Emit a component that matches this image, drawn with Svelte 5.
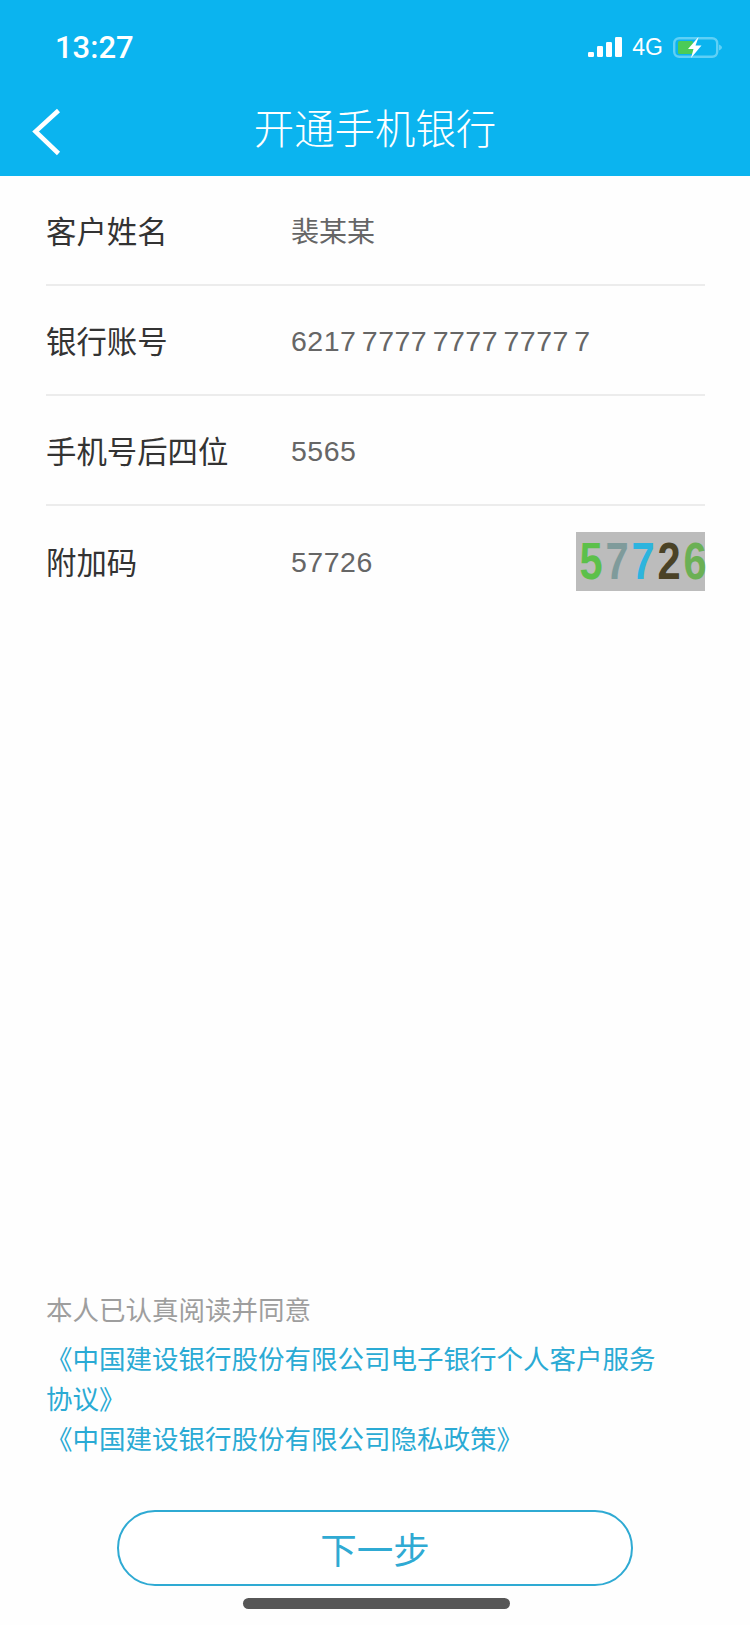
<script lang="ts">
  const rows = [
    { label: '客户姓名', value: '裴某某' },
    { label: '银行账号', value: '6217 7777 7777 7777 7', num: true },
    { label: '手机号后四位', value: '5565', num: true },
    { label: '附加码', value: '57726', num: true, captcha: true }
  ];

  const captchaDigits = [
    { ch: '5', color: '#5cc04a' },
    { ch: '7', color: '#7f9b9b' },
    { ch: '7', color: '#2db4de' },
    { ch: '2', color: '#4a4226' },
    { ch: '6', color: '#6bb055' }
  ];
</script>

<div class="page">
  <header class="top">
    <div class="status">
      <span class="time">13:27</span>
      <div class="status-right">
        <svg class="signal" viewBox="0 0 34 20" aria-hidden="true">
          <rect x="0" y="15" width="6" height="5" rx="1.2" />
          <rect x="9" y="9" width="6" height="11" rx="1.2" />
          <rect x="18" y="5" width="6" height="15" rx="1.2" />
          <rect x="27" y="0" width="7" height="20" rx="1.2" />
        </svg>
        <span class="net">4G</span>
        <svg class="battery" viewBox="0 0 49 21" aria-hidden="true">
          <rect x="1.2" y="1.2" width="43" height="18.6" rx="5" fill="none" stroke="#5fd0f6" stroke-width="2.4" />
          <path d="M46 7.5c2 .8 3 2 3 3s-1 2.2-3 3z" fill="#5fd0f6" />
          <rect x="5" y="4" width="15" height="13" rx="1.5" fill="#4bcb58" />
          <path d="M25 .5 15 12h5.5L18 21l10.5-12.5h-6L25.500 .5z" fill="#fff" />
        </svg>
      </div>
    </div>
    <nav class="nav">
      <svg class="back" viewBox="0 0 30 48" aria-label="返回">
        <path d="M26.5 2.500 3.500 23.500 26.500 45.500" fill="none" stroke="#fff" stroke-width="4.500" />
      </svg>
      <h1 class="title">开通手机银行</h1>
      <span></span>
    </nav>
  </header>

  <main class="form">
    {#each rows as row}
      <div class="row">
        <span class="label">{row.label}</span>
        <span class="value" class:num={row.num}>{row.value}</span>
        {#if row.captcha}
          <div class="captcha">
            {#each captchaDigits as d}
              <span class="digit" style="color: {d.color}">{d.ch}</span>
            {/each}
          </div>
        {/if}
      </div>
    {/each}
  </main>

  <footer class="foot">
    <p class="agree">本人已认真阅读并同意</p>
    <div class="links">
      <a href="#terms">《中国建设银行股份有限公司电子银行个人客户服务协议》</a>
      <a href="#privacy">《中国建设银行股份有限公司隐私政策》</a>
    </div>
    <button class="next">下一步</button>
    <div class="home-bar"></div>
  </footer>
</div>

<style>
  :global(body) {
    margin: 0;
    background: #fff;
  }

  .page {
    display: flex;
    flex-direction: column;
    width: 750px;
    height: 1625px;
    overflow: hidden;
    font-family: "Liberation Sans", "Noto Sans CJK SC", sans-serif;
    background: #fefefe;
  }

  .top {
    background: #0bb4ef;
    color: #fff;
  }

  .status {
    display: flex;
    align-items: center;
    justify-content: space-between;
    box-sizing: border-box;
    height: 84px;
    padding: 10px 28px 0 55px;
  }

  .time {
    margin-top: 1px;
    font-family: Roboto, "Liberation Sans", sans-serif;
    font-size: 31px;
    font-weight: 500;
    line-height: 36px;
  }

  .status-right {
    display: flex;
    align-items: center;
  }

  .signal {
    width: 34px;
    height: 20px;
    fill: #fff;
  }

  .net {
    margin: 0 10px;
    font-size: 23px;
    line-height: 24px;
  }

  .battery {
    width: 49px;
    height: 21px;
  }

  .nav {
    display: grid;
    grid-template-columns: 1fr auto 1fr;
    align-items: center;
    height: 92px;
  }

  .back {
    width: 30px;
    height: 48px;
    margin: 3px 0 0 32px;
  }

  .title {
    margin: 0;
    font-size: 40.4px;
    font-weight: 300;
    line-height: 48px;
  }

  .form {
    flex: 1;
  }

  .row {
    display: flex;
    align-items: center;
    box-sizing: border-box;
    height: 110px;
    margin: 0 45px 0 46px;
    border-bottom: 2px solid #ececec;
  }

  .row:last-child {
    border-bottom: none;
  }

  .label {
    width: 245px;
    font-size: 30.4px;
    color: #333;
  }

  .value {
    flex: 1;
    font-size: 28px;
    color: #666;
  }

  .value.num {
    padding-top: 2px;
    font-size: 28.5px;
    letter-spacing: 0.5px;
    word-spacing: -3px;
  }

  .captcha {
    display: flex;
    align-items: center;
    box-sizing: border-box;
    width: 129px;
    height: 59px;
    padding-left: 1px;
    background: #bcbcbc;
    font-size: 52px;
    font-weight: 700;
    line-height: 59px;
  }

  .digit {
    width: 26px;
    text-align: center;
    transform: scaleX(0.8);
  }

  .foot {
    padding: 0 46px 16px;
  }

  .agree {
    margin: 0 0 9px;
    font-size: 26.5px;
    line-height: 40px;
    color: #9e9e9e;
  }

  .links {
    width: 624px;
  }

  .links a {
    display: block;
    font-size: 26.5px;
    line-height: 40px;
    color: #2aaad4;
    text-decoration: none;
  }

  .next {
    display: block;
    box-sizing: border-box;
    width: 516px;
    height: 76px;
    margin: 50px auto 0;
    padding: 0;
    background: #fff;
    border: 2.500px solid #2faad3;
    border-radius: 38px;
    color: #2faad3;
    font: inherit;
    font-size: 36.500px;
  }

  .home-bar {
    width: 267px;
    height: 11px;
    margin: 12px auto 0;
    background: #565656;
    border-radius: 6px;
    transform: translateX(1px);
  }
</style>
